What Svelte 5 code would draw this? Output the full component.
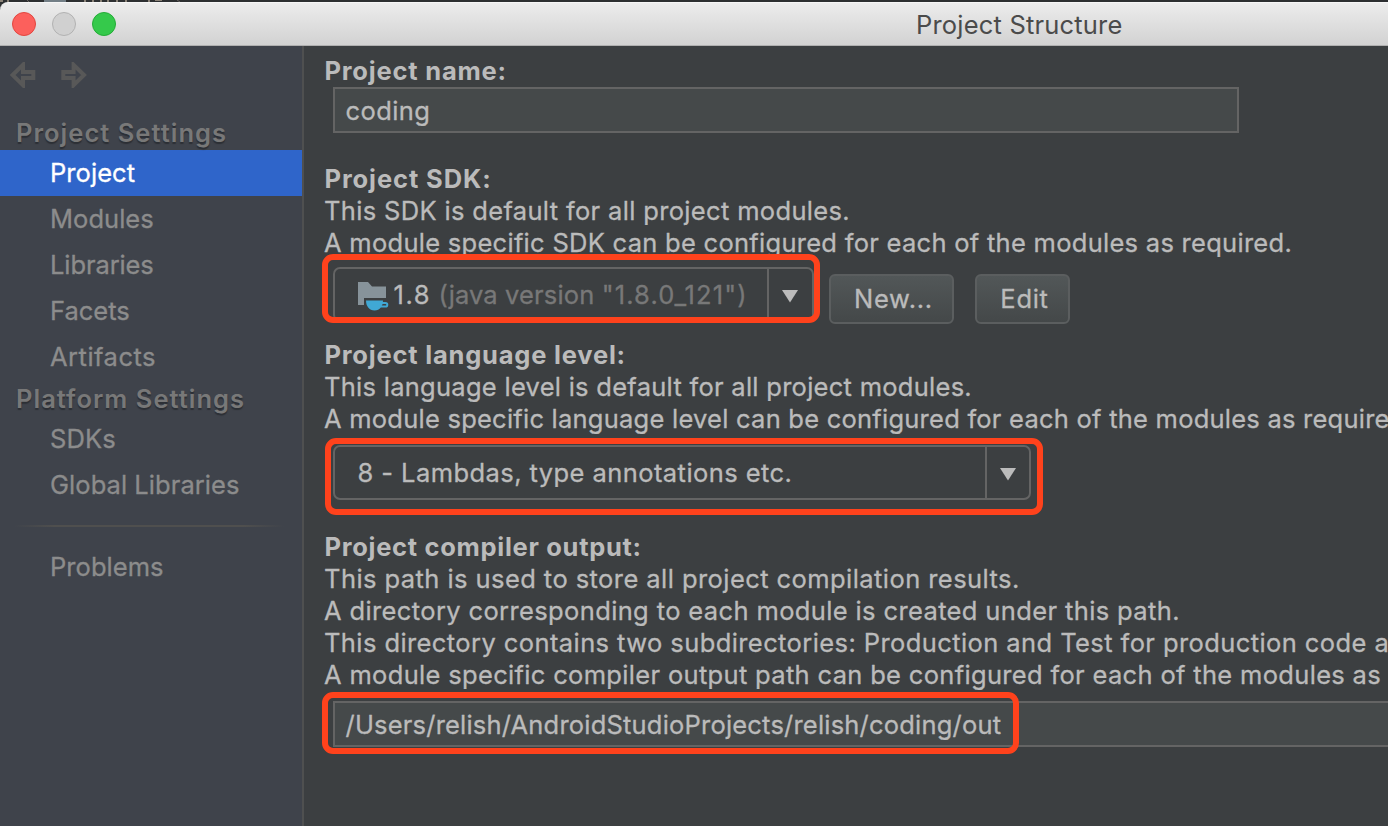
<script>
  const projectItems = [
    { label: 'Project', ls: 0.05, active: true },
    { label: 'Modules', ls: 0.03 },
    { label: 'Libraries', ls: -0.1 },
    { label: 'Facets', ls: 0 },
    { label: 'Artifacts', ls: 0.49 }
  ];
  const platformItems = [
    { label: 'SDKs', ls: 0.1 },
    { label: 'Global Libraries', ls: 0.05 }
  ];
  const sdkText = [
    { text: 'This SDK is default for all project modules.', ls: 0.337 },
    { text: 'A module specific SDK can be configured for each of the modules as required.', ls: 0.28 }
  ];
  const levelText = [
    { text: 'This language level is default for all project modules.', ls: 0.273 },
    { text: 'A module specific language level can be configured for each of the modules as required.', ls: 0.237 }
  ];
  const outputText = [
    { text: 'This path is used to store all project compilation results.', ls: 0.43 },
    { text: 'A directory corresponding to each module is created under this path.', ls: 0.37 },
    { text: 'This directory contains two subdirectories: Production and Test for production code and test sources, respectively.', ls: 0.41 },
    { text: 'A module specific compiler output path can be configured for each of the modules as required.', ls: 0.325 }
  ];
</script>

{#snippet lines(list)}
  {#each list as line}
    <p style:letter-spacing="{line.ls}px">{line.text}</p>
  {/each}
{/snippet}

{#snippet navItems(list)}
  <ul>
    {#each list as item}
      <li class:active={item.active} style:letter-spacing="{item.ls}px">{item.label}</li>
    {/each}
  </ul>
{/snippet}

{#snippet arrow()}
  <svg width="16" height="13" viewBox="0 0 16 13"><path d="M0 0H16L8 12.5Z" fill="#bbbbbb" /></svg>
{/snippet}

<div class="window">
  <div class="behind">
    <svg width="200" height="2" viewBox="0 0 200 2">
      <path d="M0 0H3V2H0ZM7 0H9V2H7ZM84 0H86V2H84ZM92 0H94V2H92ZM100 0H102V2H100ZM107 0H109V2H107ZM116 0H118V2H116ZM125 0H127V2H125ZM148 0H150V2H148ZM155 0H162V1H155Z" fill="#8b8378" />
      <path d="M44 0H66V2H44Z" fill="#737f86" />
      <path d="M27 0L29 2M177 0L180 2" stroke="#66625e" />
    </svg>
  </div>
  <header>
    <div class="lights"><i class="red"></i><i class="grey"></i><i class="green"></i></div>
    <h1>Project Structure</h1>
  </header>

  <div class="body">
    <nav>
      <div class="history">
        <svg width="26" height="26" viewBox="0 0 26 26"><path d="M2.6 13L13 2.8V10H23.3V16H13V23.2Z" fill="none" stroke="#585858" stroke-width="4" /></svg>
        <svg width="26" height="26" viewBox="0 0 26 26"><path d="M23 13L12.6 2.8V10H2.3V16H12.6V23.2Z" fill="none" stroke="#585858" stroke-width="4" /></svg>
      </div>
      <h2>Project Settings</h2>
      {@render navItems(projectItems)}
      <h2 class="platform">Platform Settings</h2>
      {@render navItems(platformItems)}
      <div class="rule"></div>
      {@render navItems([{ label: 'Problems', ls: 0.05 }])}
    </nav>

    <main>
      <h3>Project name:</h3>
      <div class="field name">coding</div>

      <h3 class="sdk-title">Project SDK:</h3>
      {@render lines(sdkText)}
      <div class="sdk-row">
        <div class="combo sdk">
          <div class="value">
            <svg class="folder" width="31" height="29" viewBox="0 0 31 29">
              <path d="M0 0H10L14 4.500H28V16H6V23H0Z" fill="#87939a" />
              <path d="M8 18.500H25C25 24 22 28.500 16.500 28.500C11 28.500 8 24 8 18.500Z" fill="#40a8d4" />
              <path d="M23.500 20.900H27.500Q29.300 20.900 29.300 22.700Q29.300 24.600 27.500 24.600H22.500" fill="none" stroke="#40a8d4" stroke-width="2" />
            </svg>
            <span class="ver">1.8</span><span class="java">(java version <span class="digits">"1.8.0_121")</span></span>
          </div>
          <div class="drop">{@render arrow()}</div>
          <div class="mark mark-sdk"></div>
        </div>
        <button class="new">New...</button>
        <button class="edit">Edit</button>
      </div>

      <h3 class="level-title">Project language level:</h3>
      {@render lines(levelText)}
      <div class="combo level">
        <div class="value">8 - Lambdas, type annotations etc.</div>
        <div class="drop">{@render arrow()}</div>
        <div class="mark mark-level"></div>
      </div>

      <h3 class="output-title">Project compiler output:</h3>
      {@render lines(outputText)}
      <div class="field output">/Users/relish/AndroidStudioProjects/relish/coding/out
        <div class="mark mark-output"></div>
      </div>
    </main>
  </div>
</div>

<style>
  :global(body) { margin: 0; background: #3c3f41; overflow: hidden; }
  .window {
    width: 1388px; height: 826px; overflow: hidden;
    display: flex; flex-direction: column;
    font: 400 25.5px/32px Inter, sans-serif; color: #bbbbbb;
    -webkit-text-stroke: 0.3px currentColor;
    background: #2d2f31;
  }
  h1, h2, h3, p, ul { margin: 0; padding: 0; font-size: inherit; }
  .behind { height: 2px; flex: none; background: #2d2f31; }
  .behind svg { display: block; }
  header {
    height: 44px; flex: none; box-sizing: border-box; display: flex; align-items: center;
    background: linear-gradient(#ececec, #d2d2d2);
    border-top: 1px solid #f6f6f6; border-bottom: 1px solid #b0b0b0;
    border-top-left-radius: 8px;
  }
  .lights { display: flex; gap: 16px; padding-left: 12px; width: 904px; box-sizing: border-box; flex: none; }
  .lights i { width: 24px; height: 24px; border-radius: 50%; box-sizing: border-box; border: 1px solid; }
  .lights .red { background: #fc605c; border-color: #e2463f; }
  .lights .grey { background: #d0d0d0; border-color: #b2b2b2; }
  .lights .green { background: #35c94b; border-color: #24ac37; }
  h1 { margin-left: 12px; padding-top: 2px; font-weight: 400; letter-spacing: 0.19px; color: #4b4b4b; white-space: nowrap; -webkit-text-stroke: 0; }

  .body { flex: 1; display: flex; min-height: 0; background: #3c3f41; }
  nav { width: 302px; flex: none; background: #3f434b; border-right: 2px solid #4f5050; color: #8c8c8c; }
  .history { display: flex; gap: 25px; padding: 16px 0 0 10px; height: 55px; }
  .history svg { display: block; }
  h2 {
    padding-left: 16px; height: 33px; font-weight: 600; letter-spacing: 1.02px; line-height: 32px;
    color: #787878; text-shadow: 0 2px 1px #2c2f35; white-space: nowrap; -webkit-text-stroke: 0;
  }
  h2.platform { height: 36px; line-height: 37px; }
  ul { list-style: none; }
  li { height: 46px; line-height: 46px; padding-left: 50px; white-space: nowrap; }
  li.active { background: #2f65ca; color: #fff; }
  .rule {
    height: 2px; margin: 17px 18px 17px 14px;
    background: linear-gradient(90deg, transparent, #4f4f4e 15%, #4f4f4e 85%, transparent);
  }

  main { flex: 1; min-width: 0; padding: 9px 0 0 20px; overflow: hidden; }
  h3 { font-weight: 700; letter-spacing: 0.79px; height: 32px; white-space: nowrap; padding-left: 0.5px; -webkit-text-stroke: 0; }
  p { height: 32px; white-space: nowrap; }
  .field {
    position: relative; box-sizing: border-box; height: 46px; margin-left: 9px; border: 2px solid #646464;
    background: #45494a; line-height: 44px; padding-left: 10.5px; white-space: nowrap;
  }
  .name { width: 906px; letter-spacing: 0.42px; }
  .output { width: 1100px; margin-top: 10px; letter-spacing: 0.2px; }
  .sdk-title { margin-top: 30px; letter-spacing: 0.9px; }
  .level-title { margin-top: 16px; }
  .output-title { margin-top: 31px; letter-spacing: 0.7px; }

  .sdk-row { display: flex; align-items: flex-start; margin-top: 8px; height: 56px; }
  .combo {
    position: relative; box-sizing: border-box; display: flex; margin-left: 9px;
    border: 2px solid #646464; border-radius: 7px;
  }
  .combo.sdk { width: 481px; height: 55px; flex: none; }
  .combo.level { width: 698px; height: 55px; margin-top: 10px; }
  .value { flex: 1; display: flex; align-items: center; white-space: nowrap; padding-top: 1px; }
  .level .value { padding-left: 22.5px; letter-spacing: 0.43px; }
  .sdk .value { padding-left: 23px; }
  .folder { margin: 2px 4px 0 0; flex: none; }
  .ver { letter-spacing: 1.6px; width: 45.5px; text-indent: 0.5px; }
  .java { letter-spacing: 0.13px; color: #787878; }
  .digits { letter-spacing: 1.15px; }
  .drop { width: 44px; border-left: 2px solid #646464; box-sizing: border-box; display: flex; align-items: center; justify-content: center; }
  .sdk .drop { width: 45px; padding-right: 2px; }
  .drop svg { margin-top: 3px; }

  .mark { position: absolute; box-sizing: border-box; border: 6px solid #ff421c; border-radius: 11px; }
  .mark-sdk { left: -13px; top: -15px; width: 498px; height: 68.5px; }
  .mark-level { left: -10.5px; top: -9.5px; width: 718.5px; height: 77.5px; }
  .mark-output { left: -13px; top: -11px; width: 697px; height: 62px; }

  button {
    height: 50px; margin-top: 6.5px; padding: 0 0 0 4px; box-sizing: border-box; font: inherit; color: #bbbbbb;
    border: 2px solid #5b5e5f; border-radius: 6px; letter-spacing: 0.7px;
    background: linear-gradient(#525758, #444849);
    -webkit-text-stroke: inherit;
  }
  .new { width: 125px; margin-left: 15px; }
  .edit { width: 95px; margin-left: 21px; }
</style>
